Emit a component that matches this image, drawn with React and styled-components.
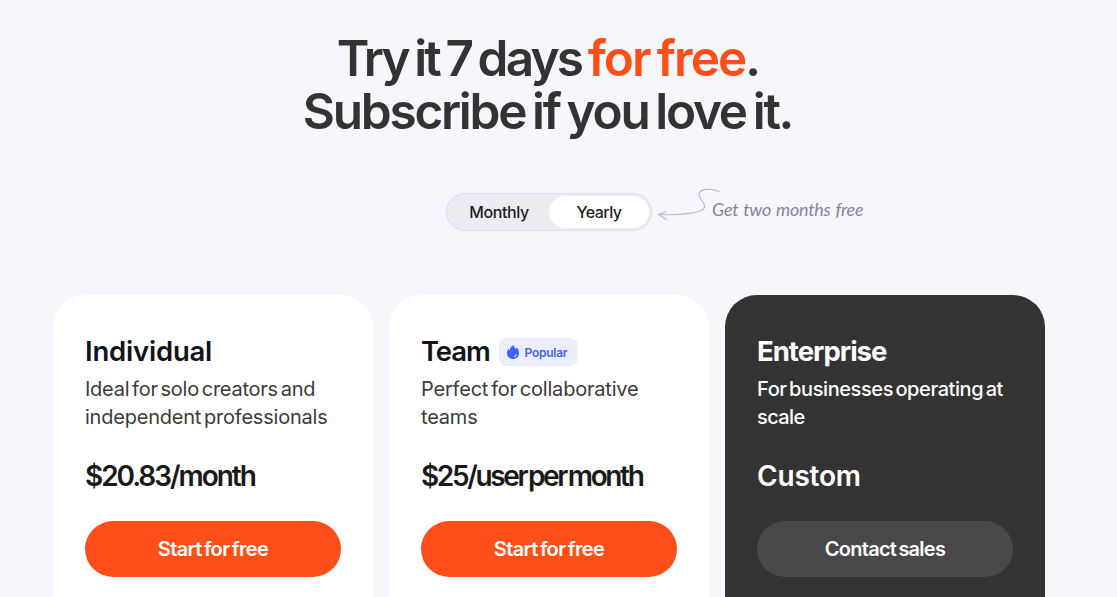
import styled, {createGlobalStyle} from 'styled-components';

const GlobalStyle=createGlobalStyle`
    * {
        box-sizing: border-box;
    }
    body {
        margin: 0;
        background-color: #f6f7fd;
        font-family: Inter, "Liberation Sans", sans-serif;
        overflow: hidden;
    }
`;

const Page=styled.main`
    height: 597px;
    padding: 32px 72px 0 53px;
    overflow: hidden;
    background-color: #f6f7fd;
`;

const Heading=styled.h1`
    margin: 0;
    padding-right: 3px;
    color: #333333;
    font-size: 49.5px;
    font-weight: 600;
    line-height: 53px;
    text-align: center;
    white-space: nowrap;
`;

const HeadingLine=styled.span`
    display: block;
    letter-spacing: ${p => p.$spacing}px;
    word-spacing: ${p => p.$words}px;
`;

const Accent=styled.span`
    color: #ff4f18;
    letter-spacing: -1.95px;
`;

const BillingRow=styled.div`
    display: grid;
    grid-template-columns: 1fr 206px 1fr;
    margin-top: 55px;
    height: 38px;
`;

const Toggle=styled.div`
    grid-column: 2;
    display: flex;
    padding: 2px;
    border: 1px solid #dcdce9;
    border-radius: 19px;
    background-color: #ecedf2;
`;

const ToggleOption=styled.button`
    width: 100px;
    height: 32px;
    padding: 0;
    border: 0;
    border-radius: 16px;
    background-color: ${p => p.$active ? '#ffffff' : 'transparent'};
    color: #1d1d1f;
    font: 500 16px/32px Inter, sans-serif;
    letter-spacing: ${p => p.$spacing}px;
`;

const Hint=styled.div`
    display: flex;
    align-items: flex-start;
    padding-left: 3px;
`;

const HintArrow=styled.svg`
    flex: none;
    margin-top: -8px;
`;

const HintText=styled.span`
    margin: 4px 0 0 -9px;
    color: #85859b;
    font: italic 400 18px/24px Lato, sans-serif;
    letter-spacing: -0.25px;
    word-spacing: 1px;
    white-space: nowrap;
`;

const Cards=styled.section`
    display: grid;
    grid-template-columns: repeat(3, 320px);
    gap: 16px;
    margin-top: 64px;
`;

const Card=styled.article`
    height: 360px;
    padding: 38px 32px 0;
    border-radius: 32px;
    background-color: ${p => p.$dark ? '#333333' : '#ffffff'};
    color: ${p => p.$dark ? '#ffffff' : '#1a1a1a'};
`;

const CardHeader=styled.div`
    display: flex;
    align-items: center;
    gap: 9px;
    height: 36px;
`;

const PlanName=styled.h2`
    margin: 0;
    color: ${p => p.$dark ? '#ffffff' : '#11131a'};
    font-size: 27.5px;
    font-weight: ${p => p.$dark ? 650 : 600};
    line-height: 36px;
    letter-spacing: ${p => p.$spacing}px;
`;

const Badge=styled.span`
    display: flex;
    align-items: center;
    gap: 6px;
    width: 79px;
    height: 28px;
    margin-top: 2px;
    padding-left: 8px;
    border-radius: 8px;
    background-color: #ebeeff;
    color: #4361ff;
    font-size: 12px;
    font-weight: 600;
    letter-spacing: -0.25px;
`;

const Description=styled.p`
    margin: 6px 0 0;
    height: 56px;
    color: ${p => p.$dark ? '#ffffff' : '#3b3b3b'};
    font-size: 20px;
    font-weight: ${p => p.$dark ? 500 : 400};
    line-height: 28px;
    white-space: nowrap;
`;

const DescriptionLine=styled.span`
    display: block;
    letter-spacing: ${p => p.$spacing}px;
    word-spacing: -2.5px;
`;

const Price=styled.div`
    margin-top: 27px;
    font-size: 28px;
    font-weight: 600;
    line-height: 36px;
    letter-spacing: ${p => p.$spacing}px;
    word-spacing: -3px;
    white-space: nowrap;
`;

const ActionButton=styled.button`
    display: block;
    width: 256px;
    height: 56px;
    margin-top: 27px;
    padding: 0;
    border: 0;
    border-radius: 28px;
    background-color: ${p => p.$dark ? '#48484a' : '#ff4f18'};
    color: #ffffff;
    font: 600 20px/56px Inter, sans-serif;
    letter-spacing: ${p => p.$spacing}px;
    word-spacing: -2px;
`;

const plans=[
    {
        name: 'Individual',
        nameSpacing: -0.2,
        lines: [['Ideal for solo creators and', -0.26], ['independent professionals', -0.22]],
        price: '$20.83/month',
        priceSpacing: -2.05,
        action: 'Start for free',
        actionSpacing: -0.65,
    },
    {
        name: 'Team',
        nameSpacing: -1.15,
        popular: true,
        lines: [['Perfect for collaborative', -0.2], ['teams', -0.2]],
        price: '$25/user per month',
        priceSpacing: -2.35,
        action: 'Start for free',
        actionSpacing: -0.65,
    },
    {
        name: 'Enterprise',
        nameSpacing: -1,
        dark: true,
        lines: [['For businesses operating at', -0.41], ['scale', -0.6]],
        price: 'Custom',
        priceSpacing: -0.2,
        action: 'Contact sales',
        actionSpacing: -0.75,
    },
];

const Flame=()=>(
    <svg width="12" height="14" viewBox="0 0 12 14" aria-hidden="true">
        <path fill="#4361ff" d="M6.600 0C6.700 1.700 7.900 2.700 8.800 4c.4-.4.7-.9.8-1.400C11.200 4.300 12 6.200 12 8.200 12 11.500 9.400 14 6 14S0 11.500 0 8.300C0 6.500.6 4.900 1.600 3.800c.2.8.5 1.300 1 1.700C2.800 3.200 4.300 1 6.600 0Z" />
        <path fill="none" stroke="#ebeeff" strokeWidth="1.100" strokeLinecap="round" d="M9.300 9.900c-.3.900-.9 1.400-1.700 1.700" />
    </svg>
)

const PlanCard=({plan})=>(
    <Card $dark={plan.dark}>
        <CardHeader>
            <PlanName $dark={plan.dark} $spacing={plan.nameSpacing}>{plan.name}</PlanName>
            {plan.popular && <Badge><Flame />Popular</Badge>}
        </CardHeader>
        <Description $dark={plan.dark}>
            {plan.lines.map(([text, spacing]) => (
                <DescriptionLine key={text} $spacing={spacing}>{text}</DescriptionLine>
            ))}
        </Description>
        <Price $spacing={plan.priceSpacing}>{plan.price}</Price>
        <ActionButton $dark={plan.dark} $spacing={plan.actionSpacing}>{plan.action}</ActionButton>
    </Card>
)

const App=()=>(
    <>
        <GlobalStyle />
        <Page>
            <Heading>
                <HeadingLine $spacing={-2.75} $words={-3.4}>Try it 7 days <Accent>for free</Accent>.</HeadingLine>
                <HeadingLine $spacing={-2.25} $words={-3.4}>Subscribe if you love it.</HeadingLine>
            </Heading>
            <BillingRow>
                <Toggle>
                    <ToggleOption $spacing={-0.4}>Monthly</ToggleOption>
                    <ToggleOption $active $spacing={-0.55}>Yearly</ToggleOption>
                </Toggle>
                <Hint>
                    <HintArrow width="66" height="40" viewBox="0 0 66 40" fill="none" stroke="#b8b8cb" strokeWidth="1.100" strokeLinecap="round">
                        <path d="M64 6.500C56 3 45 3.500 44 9c-.6 4.500 6 8 5.500 13C49 28 25 30.500 4 29.500" />
                        <path d="M11 26.500 3.500 29.500 11.500 34.500" />
                    </HintArrow>
                    <HintText>Get two months free</HintText>
                </Hint>
            </BillingRow>
            <Cards>
                {plans.map(plan => <PlanCard key={plan.name} plan={plan} />)}
            </Cards>
        </Page>
    </>
)

export default App;
